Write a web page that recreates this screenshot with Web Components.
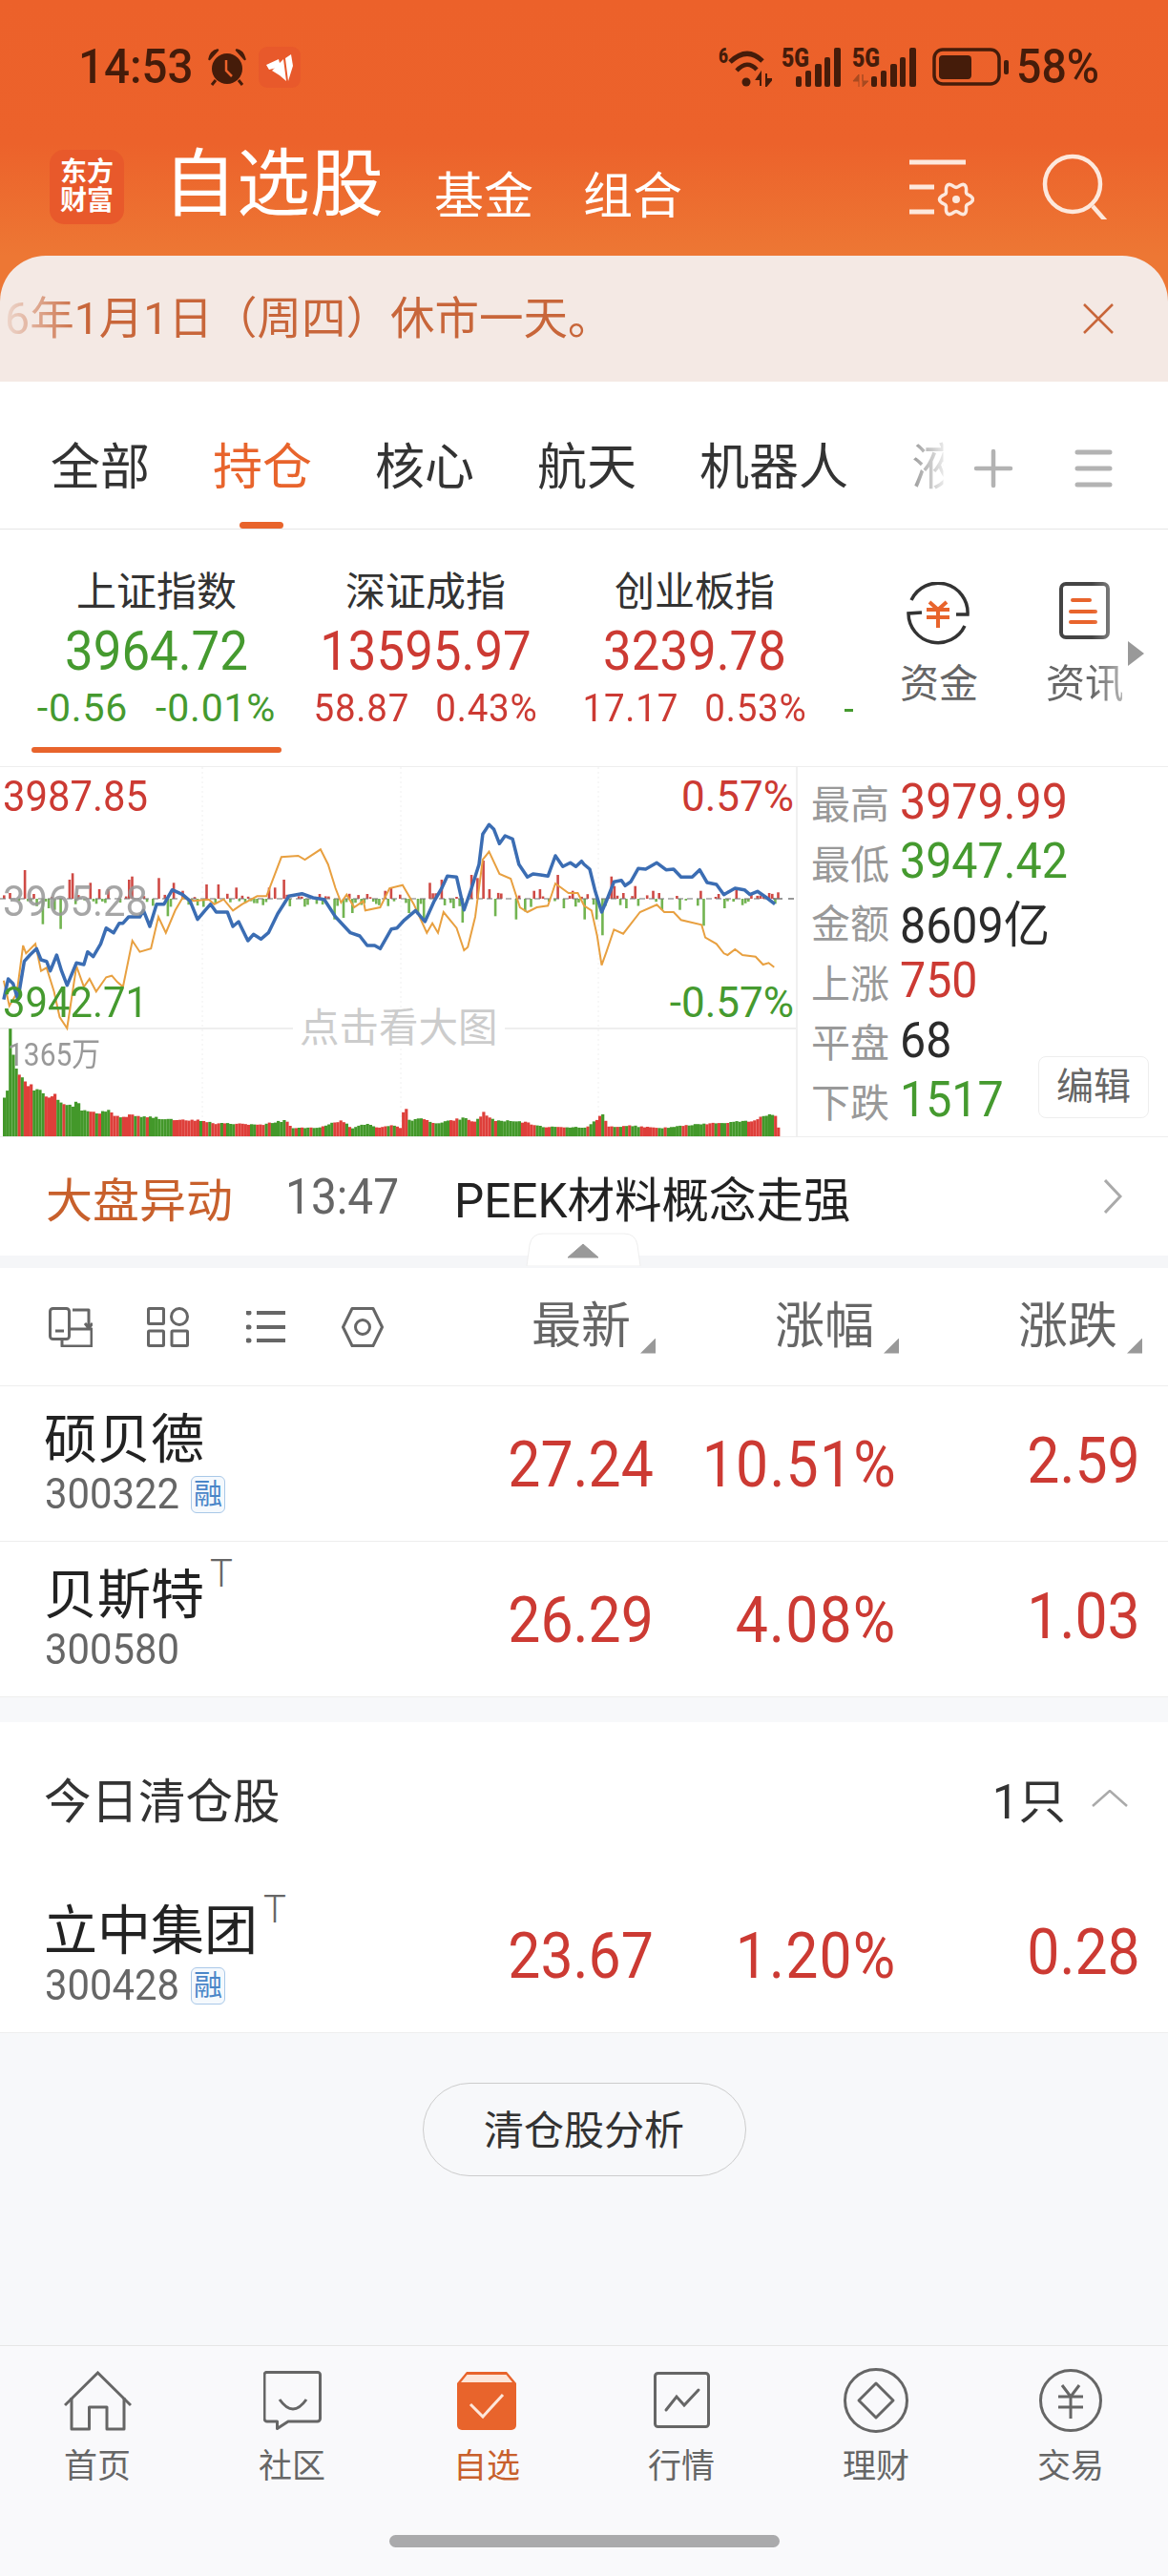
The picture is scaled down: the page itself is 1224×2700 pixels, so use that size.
<!DOCTYPE html>
<html lang="zh-CN">
<head>
<meta charset="utf-8">
<title>自选股</title>
<style>
  html, body { margin: 0; padding: 0; }
  body {
    width: 1224px;
    height: 2700px;
    overflow: hidden;
    display: flex;
    flex-direction: column;
    background: #f7f8fa;
    font-family: Roboto, "Noto Sans CJK SC", sans-serif;
    color: #222;
  }
  .filler { flex: 1; }
</style>
</head>
<body>

<app-header>
  <notice-banner>6年1月1日（周四）休市一天。</notice-banner>
</app-header>

<tab-strip></tab-strip>

<index-strip>
  <index-card name="上证指数" value="3964.72" a="-0.56" b="-0.01%" trend="down" active></index-card>
  <index-card name="深证成指" value="13595.97" a="58.87" b="0.43%" trend="up"></index-card>
  <index-card name="创业板指" value="3239.78" a="17.17" b="0.53%" trend="up"></index-card>
</index-strip>

<mini-chart>
  <stat-row label="最高" color="#cc3a33">3979.99</stat-row>
  <stat-row label="最低" color="#459a2f">3947.42</stat-row>
  <stat-row label="金额" color="#2b2b2b">8609亿</stat-row>
  <stat-row label="上涨" color="#cc3a33">750</stat-row>
  <stat-row label="平盘" color="#2b2b2b">68</stat-row>
  <stat-row label="下跌" color="#459a2f">1517</stat-row>
</mini-chart>

<alert-bar></alert-bar>
<list-tools></list-tools>

<stock-row name="硕贝德" code="300322" last="27.24" pct="10.51%" chg="2.59" rz></stock-row>
<stock-row name="贝斯特" code="300580" last="26.29" pct="4.08%" chg="1.03" t></stock-row>

<section-title count="1只">今日清仓股</section-title>
<stock-row name="立中集团" code="300428" last="23.67" pct="1.20%" chg="0.28" t rz></stock-row>

<pill-button>清仓股分析</pill-button>

<div class="filler"></div>

<bottom-nav>
  <nav-item label="首页">
    <svg width="71" height="63" viewBox="0 0 71 63" fill="none" stroke="#666" stroke-width="3"><path d="M1 36 35.500 2 70 36"/><path d="M8 28V61H26.500V38H45V61H63V28" stroke-linejoin="round"/></svg>
  </nav-item>
  <nav-item label="社区">
    <svg width="61" height="62" viewBox="0 0 61 62" fill="none" stroke="#666" stroke-width="3"><path d="M4 1.500H57a2.500 2.500 0 0 1 2.500 2.500V50a3 3 0 0 1-3 3H26L14.500 60.500V53H4a3 3 0 0 1-3-3V4A2.500 2.500 0 0 1 4 1.500Z" stroke-linejoin="round"/><path d="M17 30Q31 50 45 30"/></svg>
  </nav-item>
  <nav-item label="自选" active>
    <svg width="64" height="62" viewBox="0 0 64 62"><path d="M11 1H53L63 13V57a5 5 0 0 1-5 5H6a5 5 0 0 1-5-5V13Z" fill="#e8642c"/><path d="M11.500 4H52.500L59 12H5Z" fill="#fde6da"/><path d="M15 35 28 48 49 25" fill="none" stroke="#fde6da" stroke-width="3"/></svg>
  </nav-item>
  <nav-item label="行情">
    <svg width="59" height="60" viewBox="0 0 59 60" fill="none" stroke="#666" stroke-width="3"><rect x="1.500" y="1.500" width="56" height="56" rx="3"/><path d="M13 40 24 26 32 35 47 19" stroke-linecap="round"/></svg>
  </nav-item>
  <nav-item label="理财">
    <svg width="68" height="68" viewBox="0 0 68 68" fill="none" stroke="#666" stroke-width="3"><circle cx="34" cy="34" r="32.500"/><path d="M34 16 52 34 34 52 16 34Z" stroke-linejoin="round"/></svg>
  </nav-item>
  <nav-item label="交易">
    <svg width="66" height="66" viewBox="0 0 66 66" fill="none" stroke="#666" stroke-width="3"><circle cx="33" cy="33" r="31.500"/><path d="M24 17 33 29 42 17M20 29H46M20 40H46M33 29V52"/></svg>
  </nav-item>
</bottom-nav>

<script>
const ORANGE = '#e8642c';
const RED = '#cc3a33';
const GREEN = '#459a2f';

class AppHeader extends HTMLElement {
  constructor() {
    super();
    this.attachShadow({ mode: 'open' });
    this.shadowRoot.innerHTML = `
      <style>
        :host { display: block; height: 400px; background: linear-gradient(180deg, #ec612a 0, #ec622b 150px, #ed7734 268px, #ed7734 100%); }
        .status { height: 140px; display: flex; align-items: center; padding: 0 73px 0 82px; color: #451c0a; }
        .time { font-size: 50px; font-weight: 500; line-height: 50px; width: 136px; display: inline-block; transform: scaleX(.95); transform-origin: left; }
        .clock { width: 40px; height: 39px; }
        .app { width: 44px; height: 43px; margin-left: 13px; }
        .right { margin-left: auto; display: flex; align-items: center; }
        .pct { font-size: 50px; font-weight: 500; line-height: 50px; margin-left: 8px; display: inline-block; width: 86px; white-space: nowrap; transform: scaleX(.93); transform-origin: left; }
        .bar { height: 128px; position: relative; display: flex; padding-left: 52px; color: #fff; box-sizing: border-box; }
        .logo { width: 78px; height: 78px; margin-top: 17px; border-radius: 15px; background: #e8592b; font-size: 28px; font-weight: 700; line-height: 30px; text-align: center; display: flex; flex-direction: column; justify-content: center; }
        .title { font-size: 77px; line-height: 77px; margin: 16px 0 0 41px; }
        .sub { font-size: 52px; line-height: 52px; margin-top: 41px; }
        .sub.a { margin-left: 53px; }
        .sub.b { margin-left: 52px; }
        .tools { margin-left: auto; display: flex; padding-right: 64px; }
        .cfg { width: 68px; height: 62px; margin-top: 27px; }
        .search { width: 68px; height: 70px; margin: 20px 0 0 71px; }
      </style>
      <div class="status">
        <span class="time">14:53</span>
        <svg class="clock" viewBox="0 0 40 39">
          <circle cx="20" cy="21" r="16" fill="#451c0a"/>
          <path d="M1.500 11Q3 3 10 1.500ZM38.500 11Q37 3 30 1.500Z" fill="#451c0a" stroke="#451c0a" stroke-width="2.500" stroke-linejoin="round"/>
          <path d="M8 33 4 38M32 33 36 38" stroke="#451c0a" stroke-width="3"/>
          <path d="M19 12V23L25 29" fill="none" stroke="#ec622b" stroke-width="2.500"/>
        </svg>
        <svg class="app" viewBox="0 0 44 43">
          <rect width="44" height="43" rx="9" fill="#e8592b"/>
          <path d="M8 19 21 13 23 21 11 24Z" fill="#fff"/>
          <path d="M14 25 26 13 29 36 22 30Z" fill="#fff"/>
          <path d="M28 12 34 8 36 20 31 36Z" fill="#fff"/>
        </svg>
        <div class="right">
          <svg width="56" height="50" viewBox="0 -8 56 50" fill="none" stroke="#451c0a" style="margin-top:-8px">
            <text x="0" y="17" font-size="22" font-weight="900" fill="#451c0a" stroke="none" textLength="10" lengthAdjust="spacingAndGlyphs">6</text>
            <path d="M12 16Q30 -1 46 15" stroke-width="5"/><path d="M19 25Q30 13 40 24" stroke-width="4.500"/>
            <circle cx="29" cy="37" r="4.500" fill="#451c0a" stroke="none"/>
            <path d="M44 28 40 34H44ZM44 34V41M50 28V41M50 41 56 34H50Z" fill="#451c0a" stroke-width="2"/>
          </svg>
          <svg width="62" height="51" viewBox="0 -10 62 51" style="margin:-10px 0 0 10px">
            <text x="0" y="20" font-size="27" font-weight="900" fill="#451c0a" textLength="29" lengthAdjust="spacingAndGlyphs">5G</text>
            <g fill="#451c0a"><rect x="15" y="30" width="6" height="11" rx="2"/><rect x="25" y="24" width="6" height="17" rx="2"/><rect x="35" y="17" width="7" height="24" rx="2"/><rect x="45" y="10" width="6" height="31" rx="2"/><rect x="55" y="0" width="7" height="41" rx="2"/></g>
          </svg>
          <svg width="67" height="51" viewBox="0 -10 67 51" style="margin:-10px 0 0 12px">
            <text x="0" y="20" font-size="27" font-weight="900" fill="#451c0a" textLength="29" lengthAdjust="spacingAndGlyphs">5G</text>
            <path d="M7 28 1 35H7ZM7 35V41M11 28V41L17 35H11Z" fill="#a94a20" stroke="#a94a20"/>
            <g fill="#451c0a"><rect x="20" y="30" width="6" height="11" rx="2"/><rect x="30" y="24" width="6" height="17" rx="2"/><rect x="40" y="17" width="7" height="24" rx="2"/><rect x="50" y="10" width="6" height="31" rx="2"/><rect x="60" y="0" width="7" height="41" rx="2"/></g>
          </svg>
          <svg width="80" height="40" viewBox="0 0 80 40" style="margin-left:17px">
            <rect x="2" y="2" width="68" height="36" rx="9" fill="none" stroke="#451c0a" stroke-width="3.500"/>
            <rect x="7" y="8" width="34" height="25" rx="4" fill="#451c0a"/>
            <rect x="75" y="13" width="5" height="15" rx="2" fill="#451c0a"/>
          </svg>
          <span class="pct">58%</span>
        </div>
      </div>
      <div class="bar">
        <div class="logo"><span>东方</span><span>财富</span></div>
        <div class="title">自选股</div>
        <div class="sub a">基金</div>
        <div class="sub b">组合</div>
        <div class="tools">
          <svg class="cfg" viewBox="0 0 68 62" fill="none" stroke="#fde8dc" stroke-width="5">
            <path d="M0 3H59M0 29H26M0 55H26"/>
            <path class="gear" stroke-width="3.500"/>
            <circle cx="49" cy="42" r="4" fill="#fde8dc" stroke="none"/>
          </svg>
          <svg class="search" viewBox="0 0 68 70" fill="none" stroke="#fde8dc" stroke-width="4.500">
            <circle cx="32" cy="33" r="29"/><path d="M53 56 67 72"/>
          </svg>
        </div>
      </div>
      <slot></slot>
    `;
    let d = '';
    for (let i = 0; i <= 72; i++) {
      const th = i / 72 * Math.PI * 2;
      const r = 15 + 2.5 * Math.cos(th * 6);
      d += (i ? 'L' : 'M') + (49 + r * Math.cos(th)).toFixed(1) + ' ' + (42 + r * Math.sin(th)).toFixed(1);
    }
    this.shadowRoot.querySelector('.gear').setAttribute('d', d + 'Z');
  }
}

class NoticeBanner extends HTMLElement {
  constructor() {
    super();
    this.attachShadow({ mode: 'open' });
    this.shadowRoot.innerHTML = `
      <style>
        :host { display: flex; align-items: center; height: 132px; background: #f4e9e4; border-radius: 48px 48px 0 0; color: #c8663a; overflow: hidden; }
        .txt { flex: 1; font-size: 46.500px; line-height: 60px; padding: 0 0 0 5px; white-space: nowrap; -webkit-mask-image: linear-gradient(90deg, rgba(0,0,0,.12) 5px, #000 85px); mask-image: linear-gradient(90deg, rgba(0,0,0,.12) 5px, #000 85px); }
        svg { width: 32px; height: 32px; margin-right: 57px; }
      </style>
      <div class="txt"><slot></slot></div>
      <svg viewBox="0 0 32 32" fill="none" stroke="#c8663a" stroke-width="2.500"><path d="M1 1 31 31M31 1 1 31"/></svg>
    `;
  }
}

class TabStrip extends HTMLElement {
  constructor() {
    super();
    this.attachShadow({ mode: 'open' });
    this.shadowRoot.innerHTML = `
      <style>
        :host { display: flex; align-items: center; box-sizing: border-box; height: 155px; padding: 28px 58px 0 53px; background: #fff; border-bottom: 1px solid #e6e6e6; font-size: 52px; line-height: 60px; color: #333; }
        .t { margin-right: 66px; position: relative; white-space: nowrap; }
        .on { color: ${ORANGE}; }
        .on::after { content: ""; position: absolute; left: 28px; width: 46px; height: 7px; top: 86px; border-radius: 4px; background: ${ORANGE}; }
        .fade { margin-right: 0; -webkit-mask-image: linear-gradient(90deg, rgba(0,0,0,.5), rgba(0,0,0,.12) 33px, transparent 34px); mask-image: linear-gradient(90deg, rgba(0,0,0,.5), rgba(0,0,0,.12) 33px, transparent 34px); }
        .plus { margin-left: auto; }
        .menu { margin-left: 64px; }
      </style>
      <span class="t">全部</span><span class="t on">持仓</span><span class="t">核心</span><span class="t">航天</span><span class="t">机器人</span><span class="t fade">液</span>
      <svg class="plus" width="42" height="42" viewBox="0 0 42 42" stroke="#b3b3b3" stroke-width="4.500" stroke-linecap="round"><path d="M21 3V39M3 21H39"/></svg>
      <svg class="menu" width="40" height="40" viewBox="0 0 40 40" stroke="#b3b3b3" stroke-width="5" stroke-linecap="round"><path d="M3 3H37M3 20H37M3 37H37"/></svg>
    `;
  }
}

class IndexStrip extends HTMLElement {
  constructor() {
    super();
    this.attachShadow({ mode: 'open' });
    this.shadowRoot.innerHTML = `
      <style>
        :host { display: flex; box-sizing: border-box; height: 248px; padding-left: 23px; background: #fff; }
        .dash { width: 9px; height: 3px; background: ${GREEN}; margin: 188px 0 0 16px; }
        .act { width: 80px; text-align: center; font-size: 41px; line-height: 44px; color: #666; padding-top: 55px; white-space: nowrap; }
        .act svg { display: block; margin: 0 auto 19px; height: 66px; }
        .first { margin-left: 49px; }
        .second { margin-left: 73px; -webkit-mask-image: linear-gradient(90deg, #000 60%, rgba(0,0,0,.5)); mask-image: linear-gradient(90deg, #000 60%, rgba(0,0,0,.5)); }
        .more { width: 17px; height: 26px; margin: 117px 0 0 6px; background: #999; clip-path: polygon(0 0, 100% 50%, 0 100%); }
      </style>
      <slot></slot>
      <div class="dash"></div>
      <div class="act first">
        <svg width="66" viewBox="0 0 66 66" fill="none" stroke="#333" stroke-width="3.500">
          <path d="M5 19A31 31 0 0 1 64 34L52 34M61 46A31 31 0 0 1 2 33L16 32"/>
          <path d="M24 21 33 29 42 21M21 29H45M21 37H45M33 29V48" stroke="${ORANGE}" stroke-width="4"/>
        </svg>资金
      </div>
      <div class="act second">
        <svg width="53" viewBox="0 0 53 66" fill="none" stroke="#444" stroke-width="4">
          <rect x="2" y="2" width="49" height="56" rx="5"/>
          <path d="M14 19H32M12 31H38M12 42H38" stroke="${ORANGE}" stroke-linecap="round"/>
        </svg>资讯
      </div>
      <div class="more"></div>
    `;
  }
}

class IndexCard extends HTMLElement {
  constructor() {
    super();
    this.attachShadow({ mode: 'open' });
  }
  connectedCallback() {
    const down = this.getAttribute('trend') === 'down';
    const col = down ? GREEN : RED;
    this.shadowRoot.innerHTML = `
      <style>
        :host { display: block; width: 282px; position: relative; text-align: center; padding-top: 45px; box-sizing: border-box; }
        .n { font-size: 42px; line-height: 41px; color: #333; }
        .v { font-size: 58px; line-height: 62px; margin-top: 10px; color: ${col}; transform: scaleX(.91); }
        .d { font-size: 41px; line-height: 44px; margin-top: 7px; color: ${col}; display: flex; justify-content: center; gap: 29px; letter-spacing: .8px; white-space: nowrap; transform: scaleX(${down ? 1 : 0.94}); }
        .u { position: absolute; left: 10px; top: 228px; width: 262px; height: 6px; border-radius: 3px; background: ${ORANGE}; }
      </style>
      <div class="n">${this.getAttribute('name')}</div>
      <div class="v">${this.getAttribute('value')}</div>
      <div class="d"><span>${this.getAttribute('a')}</span><span>${this.getAttribute('b')}</span></div>
      ${this.hasAttribute('active') ? '<div class="u"></div>' : ''}
    `;
  }
}

// 分时图的折线点，取自截图坐标 (dx = x*2.56, dy = (y-790)*3)
const BLUE_PTS = [[10,770],[22,705],[35,720],[48,770],[65,650],[80,630],[98,610],[110,645],[125,650],[135,680],[152,630],[165,680],[180,725],[205,655],[225,660],[235,620],[250,635],[270,595],[285,545],[305,560],[320,530],[330,530],[345,510],[375,510],[385,490],[402,540],[420,470],[440,470],[462,425],[490,440],[510,460],[530,518],[550,490],[565,470],[580,495],[610,495],[625,540],[640,525],[665,585],[680,565],[700,580],[720,560],[745,500],[775,445],[810,437],[840,450],[870,455],[900,510],[940,560],[965,570],[985,600],[1005,600],[1020,610],[1050,548],[1065,545],[1085,520],[1115,490],[1140,525],[1165,460],[1185,420],[1200,382],[1225,385],[1245,488],[1265,420],[1285,345],[1295,250],[1312,220],[1325,235],[1340,280],[1355,255],[1375,265],[1392,345],[1415,385],[1430,375],[1450,378],[1470,382],[1490,318],[1510,352],[1530,340],[1545,352],[1560,335],[1567,345],[1582,360],[1597,430],[1614,495],[1627,460],[1647,400],[1667,395],[1677,412],[1692,400],[1712,358],[1732,360],[1762,340],[1787,362],[1807,360],[1827,385],[1857,385],[1877,362],[1897,402],[1922,408],[1942,440],[1972,420],[1997,425],[2012,440],[2032,430],[2057,450],[2079,470]];
const GOLD_PTS = [[10,710],[25,790],[45,750],[62,600],[70,625],[95,595],[110,680],[125,670],[145,745],[160,825],[180,860],[205,665],[225,730],[240,705],[258,745],[285,700],[300,695],[315,715],[330,730],[355,585],[375,620],[405,610],[425,510],[445,560],[470,490],[490,450],[520,460],[560,455],[575,470],[600,455],[625,490],[650,470],[690,445],[715,445],[755,322],[800,318],[818,330],[860,298],[880,345],[900,420],[915,465],[930,440],[950,480],[975,460],[980,490],[1020,480],[1045,420],[1080,410],[1110,470],[1145,560],[1160,530],[1175,560],[1190,495],[1225,545],[1245,615],[1255,605],[1275,510],[1295,330],[1312,305],[1340,375],[1370,390],[1395,480],[1415,495],[1440,480],[1470,475],[1490,405],[1525,435],[1550,435],[1567,475],[1587,490],[1602,570],[1614,662],[1627,620],[1647,550],[1672,563],[1717,495],[1762,472],[1782,495],[1807,495],[1827,520],[1882,535],[1892,575],[1922,595],[1942,625],[1952,630],[1972,612],[1992,630],[2027,635],[2047,660],[2062,655],[2077,668]];
const FLOW_BARS = {65:90,88:15,108:-80,125:-30,145:-35,162:-95,185:60,195:80,240:50,265:30,290:30,345:60,355:70,395:-10,420:65,445:-55,462:50,490:25,550:45,585:45,630:35,700:-20,720:35,735:35,755:60,815:-25,855:15,895:-65,915:-60,920:30,945:-45,985:15,1030:25,1050:35,1095:-45,1115:-50,1130:-70,1150:50,1185:60,1210:-30,1240:-75,1260:75,1275:65,1290:120,1310:30,1325:-55,1385:-65,1405:-40,1430:25,1445:30,1490:75,1510:-30,1530:25,1567:-65,1597:-65,1612:-115,1617:75,1637:70,1647:40,1660:-20,1675:-30,1702:40,1752:25,1772:-35,1817:-35,1877:25,1887:-85,1937:-30,1972:30,2082:20};
const VOL_PTS = [[10,120],[15,125],[23,340],[30,250],[45,210],[55,175],[65,175],[80,155],[90,135],[100,155],[110,145],[120,130],[130,115],[145,130],[160,110],[175,95],[190,95],[205,115],[215,80],[240,80],[260,70],[285,85],[300,65],[330,60],[350,70],[370,60],[410,60],[440,55],[480,50],[540,50],[570,40],[640,40],[700,35],[730,45],[765,50],[780,25],[850,28],[915,50],[940,25],[980,40],[1010,25],[1050,35],[1070,25],[1082,108],[1095,50],[1130,55],[1170,40],[1240,58],[1270,45],[1295,75],[1320,50],[1400,45],[1450,30],[1567,28],[1597,50],[1612,75],[1627,30],[1687,33],[1767,25],[1887,40],[1967,45],[2017,50],[2057,68],[2077,65],[2084,28]];

class MiniChart extends HTMLElement {
  constructor() {
    super();
    this.attachShadow({ mode: 'open' });
    this.shadowRoot.innerHTML = `
      <style>
        :host { display: flex; box-sizing: border-box; height: 389px; background: #fff; border-top: 1px solid #eee; border-bottom: 1px solid #eee; }
        .plot { width: 834px; height: 387px; position: relative; border-right: 2px solid #f0f0f0; flex: none; }
        svg { position: absolute; left: 0; top: 0; }
        .l { position: absolute; font-size: 44px; line-height: 42px; white-space: nowrap; transform: scaleX(.95); transform-origin: left; }
        .r { position: absolute; right: 2px; font-size: 44px; line-height: 42px; white-space: nowrap; }
        .hint { position: absolute; left: 307px; top: 253px; padding: 0 7px; background: #fff; font-size: 41.500px; line-height: 42px; color: #ccc; }
        .vol { position: absolute; left: 8px; top: 280px; font-size: 34px; line-height: 42px; color: #999; white-space: nowrap; transform: scaleX(.88); transform-origin: left; }
        .side { flex: 1; position: relative; padding: 5px 0 0 14px; }
        .edit { position: absolute; right: 20px; top: 303px; width: 116px; height: 65px; box-sizing: border-box; border: 1px solid #eee; border-radius: 8px; font-size: 39px; line-height: 63px; text-align: center; color: #666; }
      </style>
      <div class="plot">
        <svg width="834" height="387" viewBox="0 0 834 387"></svg>
        <div class="l" style="left:3px;top:10px;color:${RED}">3987.85</div>
        <div class="r" style="top:10px;color:${RED}">0.57%</div>
        <div class="l" style="left:3px;top:120px;color:rgba(150,150,150,.85)">3965.28</div>
        <div class="l" style="left:3px;top:226px;color:${GREEN}">3942.71</div>
        <div class="r" style="top:226px;color:${GREEN}">-0.57%</div>
        <div class="vol">1365万</div>
        <div class="hint">点击看大图</div>
      </div>
      <div class="side"><slot></slot><div class="edit">编辑</div></div>
    `;
    this._draw();
  }

  _draw() {
    const svg = this.shadowRoot.querySelector('svg');
    const px = (d) => d / 2.56;
    const py = (d) => d / 3 - 13;
    const line = (pts) => pts.map((p, i) => (i ? 'L' : 'M') + px(p[0]).toFixed(1) + ' ' + py(p[1]).toFixed(1)).join('');
    let seed = 7;
    const rnd = () => { seed = (seed * 1103515245 + 12345) & 0x7fffffff; return seed / 0x7fffffff; };
    let s = '';
    [212, 420, 627].forEach((x) => {
      s += `<path d="M${x} 0V387" stroke="#f0f0f0" stroke-dasharray="2 3"/>`;
    });
    s += '<path d="M0 274H834" stroke="#eee" stroke-width="2"/>';

    // 量柱，红绿成段出现
    let red = true;
    for (let x = 3; x < 815; x += 3.12) {
      const dx = x * 2.56;
      let i = 0;
      while (i < VOL_PTS.length - 2 && VOL_PTS[i + 1][0] < dx) i++;
      const a = VOL_PTS[i], b = VOL_PTS[i + 1];
      const t = Math.min(1, Math.max(0, (dx - a[0]) / (b[0] - a[0])));
      const h = (a[1] + (b[1] - a[1]) * t) / 3 * (0.94 + rnd() * 0.12);
      if (rnd() < 0.35) red = !red;
      s += `<rect x="${x.toFixed(1)}" y="${(387 - h).toFixed(1)}" width="3.200" height="${h.toFixed(1)}" fill="${red ? '#de3f3a' : '#43982a'}"/>`;
    }

    // 红绿柱
    const keys = Object.keys(FLOW_BARS).map(Number);
    for (let x = 3; x < 815; x += 3.12) {
      const dx = x * 2.56;
      const k = keys.find((q) => Math.abs(q - dx) < 4);
      let v = k !== undefined ? FLOW_BARS[k] : 0;
      if (k === undefined) {
        const r = rnd();
        if (r < 0.25) v = 5 + rnd() * 14;
        else if (r < 0.55) v = -(5 + rnd() * 22);
      }
      const h = Math.abs(v) / 3;
      const top = v > 0 ? 138 - h : 138;
      s += `<rect x="${x.toFixed(1)}" y="${top.toFixed(1)}" width="2.600" height="${h.toFixed(1)}" fill="${v > 0 ? '#cf4a45' : '#72b451'}"/>`;
    }
    s += '<path d="M0 138H812" stroke="#777" stroke-width="1.500" stroke-dasharray="6 4" opacity=".7"/><path d="M810 138H832" stroke="#777" stroke-width="1.500" stroke-dasharray="10 6"/>';
    s += `<path d="${line(GOLD_PTS)}" fill="none" stroke="#e8a040" stroke-width="2"/>`;
    s += `<path d="${line(BLUE_PTS)}" fill="none" stroke="#3b6db3" stroke-width="3.500" stroke-linejoin="round"/>`;
    svg.innerHTML = s;
  }
}

class StatRow extends HTMLElement {
  constructor() {
    super();
    this.attachShadow({ mode: 'open' });
  }
  connectedCallback() {
    this.shadowRoot.innerHTML = `
      <style>
        :host { display: flex; align-items: center; height: 62.500px; white-space: nowrap; }
        .k { width: 93px; font-size: 41px; color: #999; }
        .v { display: inline-block; font-size: 52px; color: ${this.getAttribute('color')}; transform: scaleX(.93); transform-origin: left; }
      </style>
      <span class="k">${this.getAttribute('label')}</span><span class="v"><slot></slot></span>
    `;
  }
}

class AlertBar extends HTMLElement {
  constructor() {
    super();
    this.attachShadow({ mode: 'open' });
    this.shadowRoot.innerHTML = `
      <style>
        :host { display: block; position: relative; background: #fff; }
        .row { height: 124px; display: flex; align-items: center; padding: 0 48px 0 48px; box-sizing: border-box; white-space: nowrap; }
        .tag { font-size: 49px; color: #c8602c; width: 251px; }
        .time { display: inline-block; font-size: 52px; color: #666; width: 177px; transform: scaleX(.92); transform-origin: left; }
        .txt { font-size: 49.500px; color: #222; }
        .row svg { margin-left: auto; }
        .strip { height: 13px; background: #f5f6f8; }
        .handle { position: absolute; left: 551px; top: 100px; }
      </style>
      <div class="row">
        <span class="tag">大盘异动</span><span class="time">13:47</span><span class="txt">PEEK材料概念走强</span>
        <svg width="19" height="36" viewBox="0 0 19 36" fill="none" stroke="#aaa" stroke-width="3"><path d="M1 1 17 18 1 35"/></svg>
      </div>
      <div class="strip"></div>
      <svg class="handle" width="121" height="35" viewBox="0 0 121 35">
        <path d="M1 35 4 13Q6 1 18 1H103Q115 1 117 13L120 35Z" fill="#fff" stroke="#eee"/>
        <path d="M60 12 76 26H44Z" fill="#999" stroke="#999" stroke-linejoin="round"/>
      </svg>
    `;
  }
}

class ListTools extends HTMLElement {
  constructor() {
    super();
    this.attachShadow({ mode: 'open' });
    this.shadowRoot.innerHTML = `
      <style>
        :host { display: grid; grid-template-columns: 1fr 255px 255px 255px; align-items: center; box-sizing: border-box; height: 124px; padding: 0 27px 0 51px; background: #fff; border-bottom: 1px solid #eee; }
        .icons { display: flex; align-items: center; }
        .h { display: flex; justify-content: flex-end; font-size: 52px; line-height: 50px; color: #666; gap: 10px; }
        .h i { width: 16px; height: 16px; align-self: flex-end; margin-bottom: -3px; background: #999; clip-path: polygon(100% 0, 100% 100%, 0 100%); }
      </style>
      <div class="icons">
        <svg width="46" height="42" viewBox="0 0 46 42" fill="none" stroke="#666" stroke-width="3" stroke-linejoin="round">
          <rect x="1.500" y="1.500" width="20" height="32" rx="3"/><path d="M7 25H16M21 23H45V41H14V33M25 3H42V20M38 17 42 22 46 17"/>
        </svg>
        <svg width="44" height="42" viewBox="0 0 44 42" fill="none" stroke="#666" stroke-width="3" style="margin-left:57px">
          <rect x="1.500" y="1.500" width="16" height="16" rx="1"/><circle cx="34" cy="10" r="8.500"/><rect x="1.500" y="25" width="16" height="15.500" rx="1"/><rect x="26" y="25" width="16.500" height="15.500" rx="1"/>
        </svg>
        <svg width="41" height="34" viewBox="0 0 41 34" fill="none" stroke="#666" stroke-width="4" style="margin-left:60px">
          <path d="M11 2H41M11 17H41M11 31H41"/><path d="M2 2H3M2 17H3M2 31H3" stroke-width="5" stroke-linecap="round"/>
        </svg>
        <svg width="44" height="42" viewBox="0 0 44 42" fill="none" stroke="#666" stroke-width="3" stroke-linejoin="round" style="margin-left:59px">
          <path d="M1.500 21 11 1.500H33L42.500 21 33 40.500H11Z"/><circle cx="22" cy="21" r="7.500"/>
        </svg>
      </div>
      <div class="h">最新<i></i></div>
      <div class="h">涨幅<i></i></div>
      <div class="h">涨跌<i></i></div>
    `;
  }
}

class StockRow extends HTMLElement {
  constructor() {
    super();
    this.attachShadow({ mode: 'open' });
  }
  connectedCallback() {
    this.shadowRoot.innerHTML = `
      <style>
        :host { display: grid; grid-template-columns: 1fr 255px 255px 255px; box-sizing: border-box; height: 163px; padding: 0 29px 0 46px; background: #fff; border-bottom: 1px solid #eee; }
        .name { display: inline-block; position: relative; font-size: 56px; line-height: 60px; margin-top: 26px; color: #222; }
        .t { position: absolute; left: 100%; margin-left: 6px; top: -12px; font-size: 40px; line-height: 40px; font-weight: 300; color: #666; }
        .code { display: flex; align-items: center; margin: 5px 0 0 1px; height: 44px; font-size: 44px; color: #666; }
        .num { display: inline-block; width: 153px; transform: scaleX(.95); transform-origin: left; }
        .rz { width: 36px; height: 39px; box-sizing: border-box; border: 1px solid #a9c8e8; border-radius: 6px; font-size: 30px; line-height: 36px; text-align: center; color: #4a86c8; background: #f5f9fd; overflow: hidden; }
        .v { justify-self: end; margin-top: 48px; font-size: 66px; line-height: 70px; color: ${RED}; transform: scaleX(.92); transform-origin: right; white-space: nowrap; }
        .v.p { letter-spacing: 1.300px; }
        .v.last { margin-top: 44px; }
      </style>
      <div>
        <div class="name">${this.getAttribute('name')}${this.hasAttribute('t') ? '<span class="t">T</span>' : ''}</div>
        <div class="code"><span class="num">${this.getAttribute('code')}</span>${this.hasAttribute('rz') ? '<span class="rz">融</span>' : ''}</div>
      </div>
      <div class="v">${this.getAttribute('last')}</div>
      <div class="v p">${this.getAttribute('pct')}</div>
      <div class="v last">${this.getAttribute('chg')}</div>
    `;
  }
}

class SectionTitle extends HTMLElement {
  constructor() {
    super();
    this.attachShadow({ mode: 'open' });
  }
  connectedCallback() {
    this.shadowRoot.innerHTML = `
      <style>
        :host { display: flex; align-items: center; box-sizing: border-box; height: 163px; margin-top: 26px; padding: 0 42px 4px 46px; background: #fff; font-size: 49.500px; color: #333; }
        .n { margin-left: auto; }
        svg { margin-left: 27px; }
      </style>
      <slot></slot><span class="n">${this.getAttribute('count')}</span>
      <svg width="38" height="18" viewBox="0 0 38 18" fill="none" stroke="#aaa" stroke-width="2.500"><path d="M1 17 19 1 37 17"/></svg>
    `;
  }
}

class PillButton extends HTMLElement {
  constructor() {
    super();
    this.attachShadow({ mode: 'open' });
    this.shadowRoot.innerHTML = `
      <style>
        :host { display: block; width: 339px; height: 98px; margin: 52px auto 0; box-sizing: border-box; border: 1px solid #ccc; border-radius: 49px; font-size: 42px; line-height: 100px; text-align: center; color: #333; }
      </style>
      <slot></slot>
    `;
  }
}

class BottomNav extends HTMLElement {
  constructor() {
    super();
    this.attachShadow({ mode: 'open' });
    this.shadowRoot.innerHTML = `
      <style>
        :host { display: block; box-sizing: border-box; height: 242px; background: #f9f9fb; border-top: 1px solid #e6e6e6; }
        .items { display: grid; grid-template-columns: repeat(6, 204px); height: 198px; }
        .home { width: 409px; height: 13px; margin: 0 auto; border-radius: 7px; background: #aaaaac; }
      </style>
      <div class="items"><slot></slot></div>
      <div class="home"></div>
    `;
  }
}

class NavItem extends HTMLElement {
  constructor() {
    super();
    this.attachShadow({ mode: 'open' });
  }
  connectedCallback() {
    const on = this.hasAttribute('active');
    this.shadowRoot.innerHTML = `
      <style>
        :host { display: flex; flex-direction: column; align-items: center; font-size: 35px; color: ${on ? '#c8602c' : '#666'}; }
        .ic { height: 68px; margin-top: 23px; display: flex; align-items: center; justify-content: center; }
        .lb { line-height: 40px; margin-top: 16px; }
      </style>
      <div class="ic"><slot></slot></div>
      <div class="lb">${this.getAttribute('label')}</div>
    `;
  }
}

customElements.define('app-header', AppHeader);
customElements.define('notice-banner', NoticeBanner);
customElements.define('tab-strip', TabStrip);
customElements.define('index-strip', IndexStrip);
customElements.define('index-card', IndexCard);
customElements.define('mini-chart', MiniChart);
customElements.define('stat-row', StatRow);
customElements.define('alert-bar', AlertBar);
customElements.define('list-tools', ListTools);
customElements.define('stock-row', StockRow);
customElements.define('section-title', SectionTitle);
customElements.define('pill-button', PillButton);
customElements.define('bottom-nav', BottomNav);
customElements.define('nav-item', NavItem);
</script>
</body>
</html>
